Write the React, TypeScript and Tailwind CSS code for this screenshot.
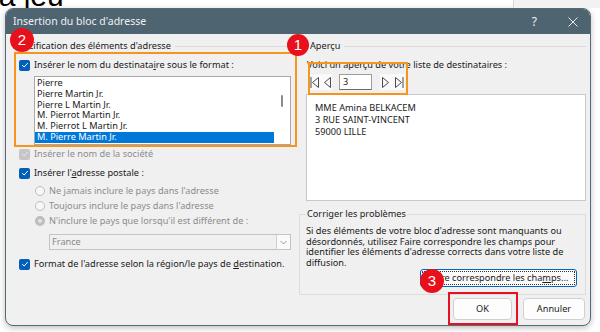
import React from 'react';

function Check({ disabled = false }: { disabled?: boolean }) {
  return (
    <span
      className={`flex h-[11px] w-[11px] shrink-0 items-center justify-center rounded-[2px] ${
        disabled ? 'bg-[#c6c6c6]' : 'bg-[#005fb8]'
      }`}
    >
      <svg width="8" height="8" viewBox="0 0 8 8">
        <path d="M1.2 4.2 L3.2 6 L6.8 2" fill="none" stroke={disabled ? '#e9e9e9' : '#ffffff'} strokeWidth="1" />
      </svg>
    </span>
  );
}

function Radio({ checked = false }: { checked?: boolean }) {
  return checked ? (
    <span className="h-[10px] w-[10px] shrink-0 rounded-full border-[3px] border-[#bdbdbd] bg-[#e4e4e4]" />
  ) : (
    <span className="h-[10px] w-[10px] shrink-0 rounded-full border border-[#bdbdbd] bg-[#f7f7f7]" />
  );
}

function Badge({ n, className }: { n: string; className: string }) {
  return (
    <span
      className={`absolute flex items-center justify-center rounded-full bg-[#e8101b] font-['Liberation_Sans',sans-serif] text-[15px] text-white ${className}`}
    >
      {n}
    </span>
  );
}

function NavArrow({ dir, bar }: { dir: 'l' | 'r'; bar?: boolean }) {
  return (
    <svg width="10" height="13" viewBox="0 0 10 13">
      {dir === 'l' ? (
        <>
          <path d="M8.5 1.5 L2.5 6.5 L8.5 11.5 Z" fill="none" stroke="#4a4a4a" strokeWidth="1" />
          {bar && <path d="M1 1 V12" stroke="#4a4a4a" strokeWidth="1" />}
        </>
      ) : (
        <>
          <path d="M1.5 1.5 L7.5 6.5 L1.5 11.5 Z" fill="none" stroke="#4a4a4a" strokeWidth="1" />
          {bar && <path d="M9 1 V12" stroke="#4a4a4a" strokeWidth="1" />}
        </>
      )}
    </svg>
  );
}

const names = [
  'Pierre',
  'Pierre Martin Jr.',
  'Pierre L Martin Jr.',
  'M. Pierrot Martin Jr.',
  'M. Pierrot L Martin Jr.',
  'M. Pierre Martin Jr.',
];

export default function App() {
  return (
    <div className="relative h-[332px] w-[600px] overflow-hidden bg-white">
      {/* document behind the dialog */}
      <div className="flex h-[8px]">
        <div className="w-[513px] overflow-hidden">
          <div className="-ml-[8px] -mt-[19px] font-['Liberation_Sans',sans-serif] text-[30px] leading-[30px] text-black">
            la jeu
          </div>
        </div>
        <div className="flex-1 border-l border-[#d6d6d6] bg-[#f2f2f2]" />
      </div>

      <div className="ml-[5px] flex h-[318px] w-[586px] flex-col overflow-hidden rounded-[8px] border border-[#566974] bg-[#f0f0f0] font-['Noto_Sans',sans-serif] text-[9.2px] text-[#1a1a1a] shadow-[0_2px_6px_rgba(0,0,0,0.25)]">
        {/* title bar */}
        <div className="flex h-[25px] shrink-0 items-center bg-[#4f6471] pl-[7px] text-[#eef1f3]">
          <span className="text-[10.5px]">Insertion du bloc d'adresse</span>
          <span className="ml-auto mr-[31px] text-[12px]">?</span>
          <svg width="10" height="10" viewBox="0 0 10 10" className="mr-[12px]">
            <path d="M0.5 0.5 L9.5 9.5 M9.5 0.5 L0.5 9.5" stroke="#e6eaed" strokeWidth="1" />
          </svg>
        </div>

        <div className="flex flex-1 pl-[7px] pt-[6px]">
          {/* left column */}
          <div className="flex w-[283px] shrink-0 flex-col">
            <div className="flex h-[12px] items-center gap-[4px]">
              <span>Spécification des éléments d'adresse</span>
              <span className="h-px flex-1 bg-[#dadada]" />
            </div>
            <div className="mt-[7px] flex h-[12px] items-center gap-[4px] pl-[6px]">
              <Check />
              <span>
                Insérer le nom du destinata<span className="underline">i</span>re sous le format :
              </span>
            </div>
            <div className="ml-[21px] mt-[5px] flex h-[69px] w-[257px] border border-[#a8a8a8] bg-white">
              <div className="flex flex-1 flex-col pt-[1px]">
                {names.map((n, i) => (
                  <div
                    key={n}
                    className={`h-[10.8px] pl-[2px] leading-[10.8px] ${
                      i === names.length - 1 ? 'bg-[#0078d7] text-white' : ''
                    }`}
                  >
                    {n}
                  </div>
                ))}
              </div>
              <div className="flex w-[16px] justify-center pt-[18px]">
                <span className="h-[12px] w-[2px] rounded-full bg-[#8a8a8a]" />
              </div>
            </div>
            <div className="mt-[3px] flex h-[12px] items-center gap-[4px] pl-[6px] text-[#8c8c8c]">
              <Check disabled />
              <span>Insérer le nom de la société</span>
            </div>
            <div className="mt-[7px] flex h-[12px] items-center gap-[4px] pl-[6px]">
              <Check />
              <span>
                Insérer l'<span className="underline">a</span>dresse postale :
              </span>
            </div>
            <div className="mt-[6px] flex h-[12px] items-center gap-[4px] pl-[22px] text-[#8c8c8c]">
              <Radio />
              <span>Ne jamais inclure le pays dans l'adresse</span>
            </div>
            <div className="mt-[3px] flex h-[12px] items-center gap-[4px] pl-[22px] text-[#8c8c8c]">
              <Radio />
              <span>Toujours inclure le pays dans l'adresse</span>
            </div>
            <div className="mt-[3px] flex h-[12px] items-center gap-[4px] pl-[22px] text-[#8c8c8c]">
              <Radio checked />
              <span>N'inclure le pays que lorsqu'il est différent de :</span>
            </div>
            <div className="ml-[36px] mt-[7px] flex h-[16px] w-[242px] items-center border border-[#c4c4c4] bg-[#f0f0f0] text-[#8a8a8a]">
              <span className="flex-1 pl-[2px]">France</span>
              <span className="flex h-full w-[14px] items-center justify-center border-l border-[#d0d0d0] bg-[#fafafa]">
                <svg width="7" height="5" viewBox="0 0 7 5">
                  <path d="M0.5 1 L3.5 4 L6.5 1" fill="none" stroke="#9a9a9a" strokeWidth="1" />
                </svg>
              </span>
            </div>
            <div className="mt-[8px] flex h-[12px] items-center gap-[4px] pl-[6px]">
              <Check />
              <span>
                Format de l'adresse selon la région/le pays de <span className="underline">d</span>estination.
              </span>
            </div>
          </div>

          {/* right column */}
          <div className="ml-[3px] flex w-[287px] shrink-0 flex-col">
            <div className="flex h-[12px] items-center gap-[4px] pl-[11px]">
              <span>Aperçu</span>
              <span className="h-px flex-1 bg-[#dadada]" />
            </div>
            <div className="mt-[7px] flex h-[12px] items-center pl-[8px]">
              Voici un aperçu de votre liste de destinataires :
            </div>
            <div className="mt-[3px] flex h-[16px] items-center pl-[10px]">
              <span className="flex h-full w-[23px] items-center justify-center gap-[2px] bg-[#fafafa]">
                <NavArrow dir="l" bar />
                <NavArrow dir="l" />
              </span>
              <span className="ml-[7px] flex h-full w-[33px] items-center border border-[#9c9c9c] border-b-[#6a6a6a] bg-white pl-[3px]">
                3
              </span>
              <span className="ml-[8px] flex h-full w-[25px] items-center justify-center gap-[3px] bg-[#fafafa]">
                <NavArrow dir="r" />
                <NavArrow dir="r" bar />
              </span>
            </div>
            <div className="ml-[7px] mt-[4px] flex h-[107px] w-[280px] flex-col border border-[#c8c8c8] bg-white pl-[8px] pt-[7px] leading-[12px]">
              <span>MME Amina BELKACEM</span>
              <span>3 RUE SAINT-VINCENT</span>
              <span>59000 LILLE</span>
            </div>
            <fieldset className="mt-[7px] flex h-[87px] flex-col border border-[#dcdcdc] px-[6px] pb-[3px]">
              <legend className="h-[12px] px-[1px] leading-[12px]">Corriger les problèmes</legend>
              <p className="mt-[6px] leading-[10.7px]">
                Si des éléments de votre bloc d'adresse sont manquants ou désordonnés, utilisez Faire correspondre
                les champs pour identifier les éléments d'adresse corrects dans votre liste de diffusion.
              </p>
              <button className="ml-auto mr-[2px] mt-auto flex h-[18px] w-[157px] items-center justify-center rounded-[3px] border border-[#0067c0] bg-[#fbfbfb] outline-1 -outline-offset-[3px] outline-dotted outline-[#333]">
                Faire correspondre les cha<span className="underline">m</span>ps...
              </button>
            </fieldset>
            <div className="mt-[3px] flex justify-end gap-[11px] pr-[1px]">
              <button className="flex h-[22px] w-[59px] items-center justify-center rounded-[4px] border border-[#d0d0d0] bg-[#fdfdfd]">
                OK
              </button>
              <button className="flex h-[22px] w-[62px] items-center justify-center rounded-[4px] border border-[#d0d0d0] bg-[#fdfdfd]">
                Annuler
              </button>
            </div>
          </div>
        </div>
      </div>

      {/* annotations */}
      <span className="absolute left-[14px] top-[52px] h-[95px] w-[283px] border-2 border-[#f7941d]" />
      <span className="absolute left-[308px] top-[62px] h-[33px] w-[100px] border-2 border-[#f7941d]" />
      <span className="absolute left-[448px] top-[292px] h-[33px] w-[70px] border-2 border-[#e81123]" />
      <Badge n="2" className="left-[10px] top-[28px] h-[24px] w-[24px]" />
      <Badge n="1" className="left-[287px] top-[34px] h-[22px] w-[22px]" />
      <Badge n="3" className="left-[420px] top-[269px] h-[24px] w-[24px]" />
    </div>
  );
}
